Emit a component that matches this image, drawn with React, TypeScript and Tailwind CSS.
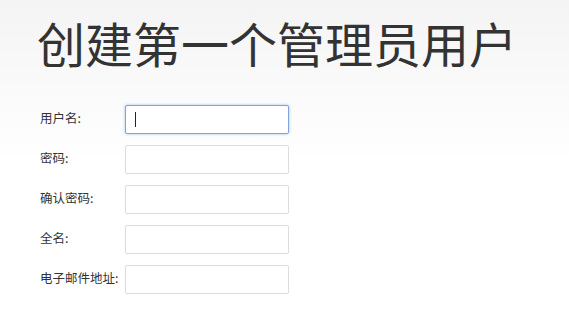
import { useEffect, useRef } from 'react';

const fields = [
  { label: '用户名:', type: 'text' },
  { label: '密码:', type: 'password' },
  { label: '确认密码:', type: 'password' },
  { label: '全名:', type: 'text' },
  { label: '电子邮件地址:', type: 'email' },
];

export default function App() {
  const firstRef = useRef<HTMLInputElement>(null);

  useEffect(() => {
    firstRef.current?.focus();
  }, []);

  return (
    <div
      className="min-h-[329px] w-full bg-gradient-to-b from-[#f4f4f4] via-white to-white text-[#333]"
      style={{ fontFamily: '"Noto Sans CJK SC", "Noto Sans", sans-serif' }}
    >
      <div className="pl-[37px] pt-[10px]">
        <h1 className="text-[48px] leading-[64px] font-normal text-[#333]">
          创建第一个管理员用户
        </h1>

        <form className="mt-[31px] flex flex-col gap-[11px]">
          {fields.map((field, i) => (
            <div key={i} className="flex items-center">
              <label className="w-[88px] shrink-0 pl-[3px] pb-[3px] text-[12.5px] leading-[16px] text-[#333]">
                {field.label}
              </label>
              <div className="relative">
                <input
                  ref={i === 0 ? firstRef : undefined}
                  type={field.type}
                  className={
                    i === 0
                      ? 'h-[29px] w-[164px] rounded-[2px] border border-[#7ea6dc] bg-white px-2 text-[13px] caret-transparent outline-none shadow-[0_0_3px_rgba(100,150,220,0.6)]'
                      : 'h-[29px] w-[164px] rounded-[2px] border border-[#dcdcdc] bg-white px-2 text-[13px] outline-none'
                  }
                />
                {i === 0 && (
                  <span className="pointer-events-none absolute left-[10px] top-[7px] h-[15px] w-px bg-[#222]" />
                )}
              </div>
            </div>
          ))}
        </form>
      </div>
    </div>
  );
}
